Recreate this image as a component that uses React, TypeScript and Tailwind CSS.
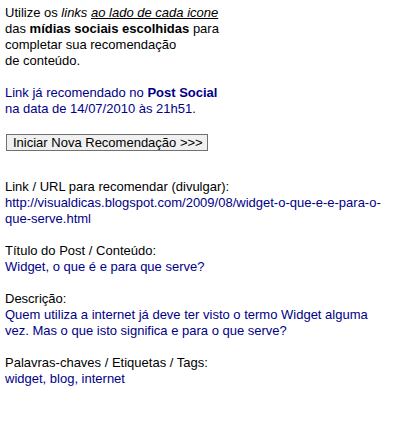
import React from "react";

export default function App() {
  const blue = "text-[#000088]";
  return (
    <div className="min-h-[430px] w-[403px] bg-white pl-[5px] pt-[5px] text-[13px] leading-[16px] text-black" style={{ fontFamily: '"Liberation Sans", Arial, sans-serif' }}>
      <div>
        Utilize os <i>links</i> <i className="underline">ao lado de cada icone</i>
        <br />
        das <b>mídias sociais escolhidas</b> para
        <br />
        completar sua recomendação
        <br />
        de conteúdo.
      </div>
      <div className={`mt-4 ${blue}`}>
        Link já recomendado no <b>Post Social</b>
        <br />
        na data de 14/07/2010 às 21h51.
      </div>
      <button className="mt-[17px] ml-px block h-[17px] w-[202px] border border-[#707070] bg-[#f0f0f0] text-left pl-[6px] text-[13px] leading-[15px] text-black">
        Iniciar Nova Recomendação &gt;&gt;&gt;
      </button>
      <div className="mt-[28px]">Link / URL para recomendar (divulgar):</div>
      <div className={`${blue} w-[380px]`}>
        http://visualdicas.blogspot.com/2009/08/widget-o-que-e-e-para-o-que-serve.html
      </div>
      <div className="mt-4">Título do Post / Conteúdo:</div>
      <div className={blue}>Widget, o que é e para que serve?</div>
      <div className="mt-4">Descrição:</div>
      <div className={`${blue} w-[380px]`}>
        Quem utiliza a internet já deve ter visto o termo Widget alguma vez. Mas o que isto significa e para o que serve?
      </div>
      <div className="mt-4">Palavras-chaves / Etiquetas / Tags:</div>
      <div className={blue}>widget, blog, internet</div>
    </div>
  );
}
